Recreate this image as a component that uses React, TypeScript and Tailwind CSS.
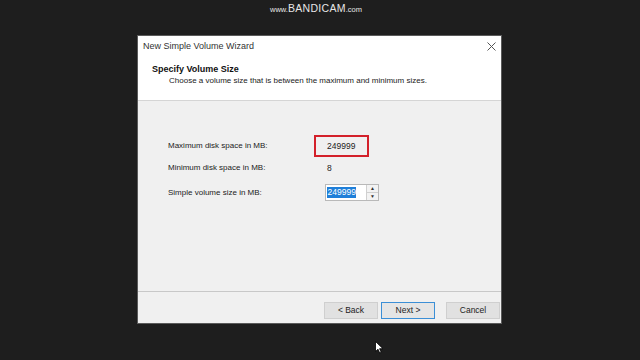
import React from "react";

const font = { fontFamily: '"Liberation Sans", Arial, sans-serif' };

function CloseIcon() {
  return (
    <svg width="9" height="9" viewBox="0 0 9 9" className="text-[#555]">
      <path d="M0.5 0.5 L8.5 8.5 M8.5 0.5 L0.5 8.5" stroke="currentColor" strokeWidth="1" />
    </svg>
  );
}

function Cursor() {
  return (
    <svg width="9" height="13" viewBox="0 0 9 13">
      <path d="M0.5 0.5 L0.5 10.5 L3 8.2 L4.7 12 L6.2 11.3 L4.6 7.7 L8 7.7 Z" fill="#fff" stroke="#000" strokeWidth="0.8" />
    </svg>
  );
}

function WizardButton({ label, primary }: { label: string; primary?: boolean }) {
  return (
    <div
      className={
        "flex h-[17px] w-[54px] items-center justify-center border text-[8.5px] text-[#222] " +
        (primary ? "border-[#3c8fd6] bg-[#e5e5e5]" : "border-[#cfcfcf] bg-[#e1e1e1]")
      }
    >
      {label}
    </div>
  );
}

export default function App() {
  return (
    <div className="relative h-[360px] w-[640px] overflow-hidden bg-[#1e1e1e]" style={font}>
      {/* recorder watermark */}
      <div className="absolute left-[270px] top-[1px] flex items-baseline text-[#e6e6e6]">
        <span className="text-[7.5px]">www.</span>
        <span className="text-[10.5px] tracking-[0.3px]">BANDICAM</span>
        <span className="text-[7.5px]">.com</span>
      </div>

      <div className="ml-[137px] mt-[35px] flex h-[289px] w-[365px] flex-col border border-[#5a5a5a] bg-[#f0f0f0]">
        <div className="flex h-[65px] flex-col border-b border-[#d5d5d5] bg-white">
          <div className="flex items-center justify-between pl-[5px] pr-[5px] pt-[4px]">
            <span className="text-[9px] leading-[12px] text-[#333]">New Simple Volume Wizard</span>
            <CloseIcon />
          </div>
          <div className="mt-[11px] pl-[14px] text-[9px] font-bold leading-[12px] text-[#111]">Specify Volume Size</div>
          <div className="pl-[31px] text-[8px] leading-[12px] text-[#222]">
            Choose a volume size that is between the maximum and minimum sizes.
          </div>
        </div>

        <div className="flex flex-1 flex-col pl-[30px] pt-[34px] text-[8px] text-[#222]">
          <div className="flex h-[22px] items-center">
            <span className="w-[146px]">Maximum disk space in MB:</span>
            <div className="flex h-[22px] w-[55px] items-center border-2 border-[#d3202a] pl-[11px] text-[8.5px]">
              249999
            </div>
          </div>
          <div className="mt-[3px] flex h-[16px] items-center">
            <span className="w-[159px]">Minimum disk space in MB:</span>
            <span className="text-[8.5px]">8</span>
          </div>
          <div className="mt-[8px] flex h-[17px] items-center">
            <span className="w-[157px]">Simple volume size in MB:</span>
            <div className="flex h-[17px] w-[54px] items-stretch border border-[#b9b9b9] bg-white">
              <div className="flex flex-1 items-center pl-[1px]">
                <span className="bg-[#1f7fd9] px-[0.5px] text-[8.5px] leading-[11px] text-white">249999</span>
              </div>
              <div className="flex w-[12px] flex-col border-l border-[#d0d0d0] bg-[#f3f3f3]">
                <div className="flex flex-1 items-center justify-center border-b border-[#d0d0d0] text-[5px] leading-none text-[#333]">
                  ▲
                </div>
                <div className="flex flex-1 items-center justify-center text-[5px] leading-none text-[#333]">▼</div>
              </div>
            </div>
          </div>
        </div>

        <div className="flex h-[32px] items-start justify-end gap-[3px] border-t border-[#c8c8c8] pr-[1px] pt-[10px]">
          <WizardButton label="< Back" />
          <WizardButton label="Next >" primary />
          <div className="w-[5px]" />
          <WizardButton label="Cancel" />
        </div>
      </div>

      <div className="absolute left-[375px] top-[341px]">
        <Cursor />
      </div>
    </div>
  );
}
